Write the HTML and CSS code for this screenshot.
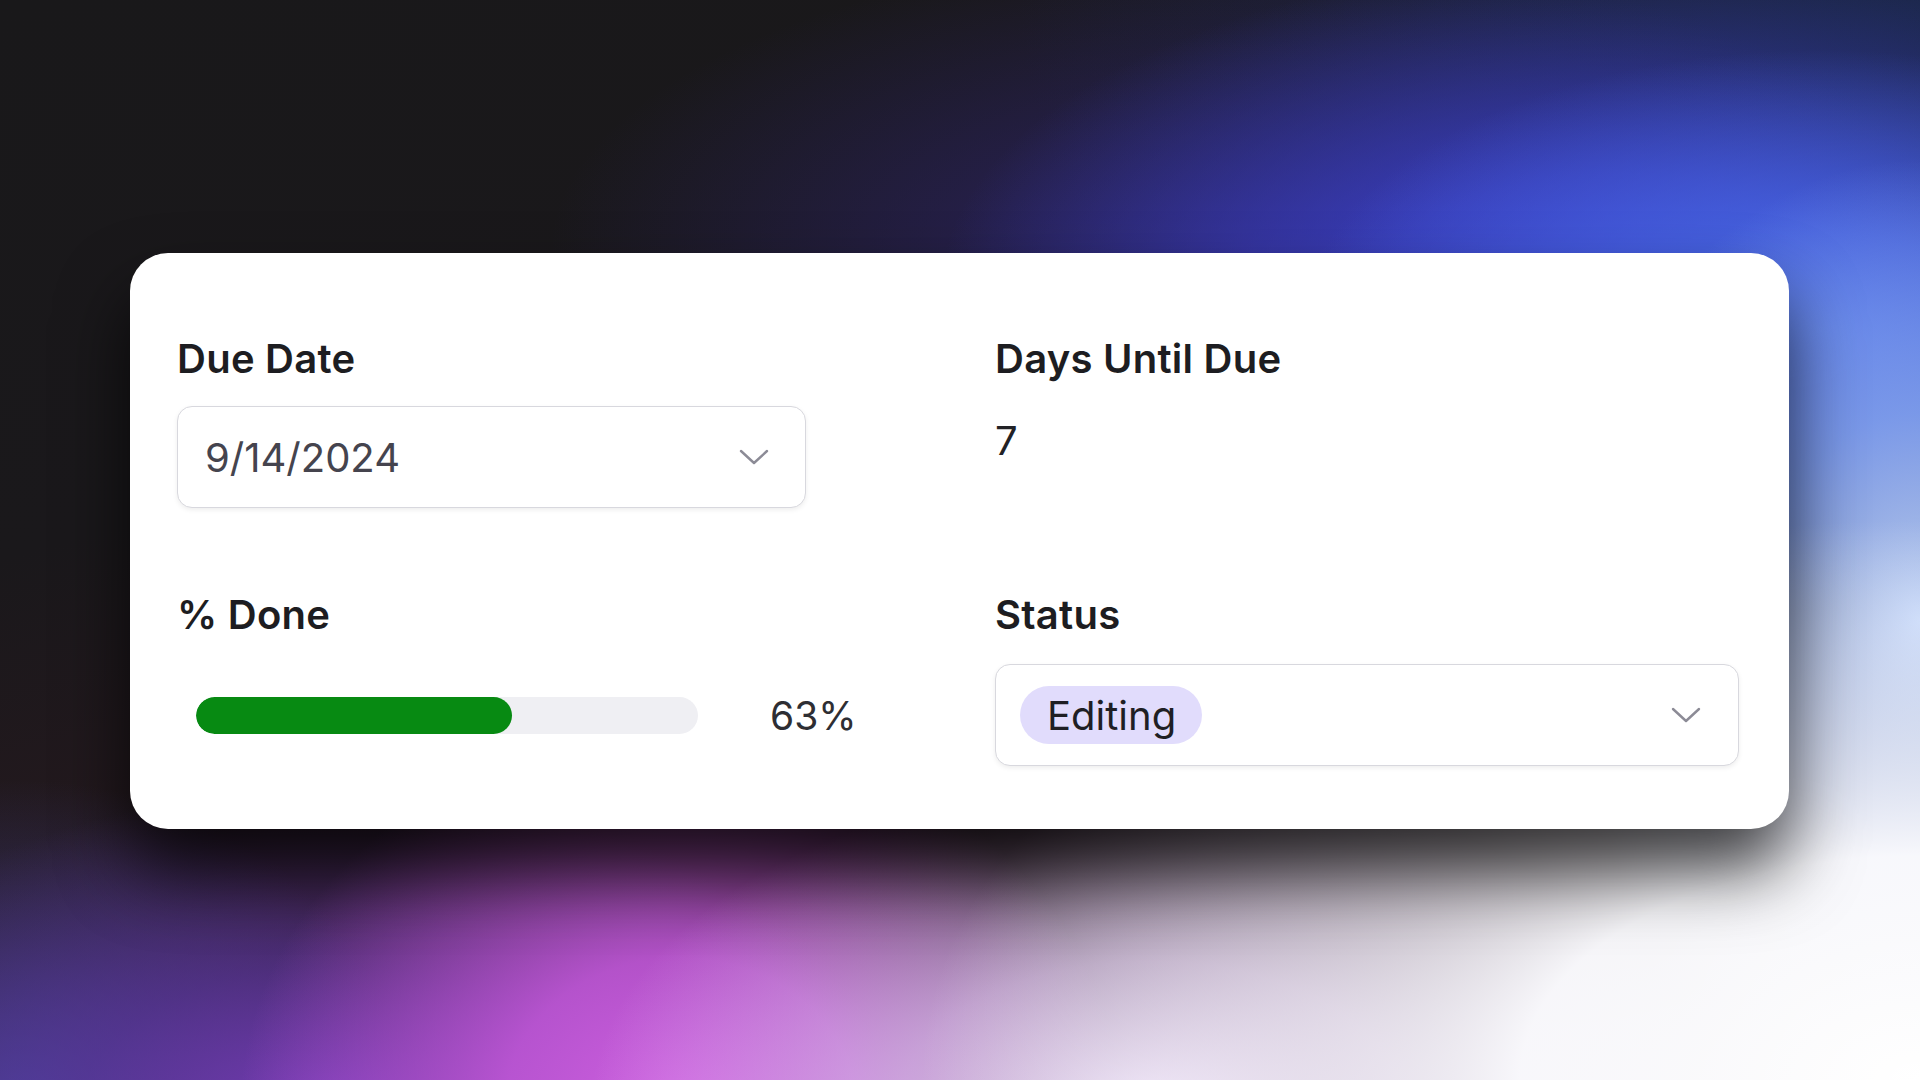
FILE: index.html
```
<!DOCTYPE html>
<html lang="en">
<head>
<meta charset="utf-8">
<title>Task properties</title>
<link rel="stylesheet" href="styles.css">
</head>
<body>
<main class="stage">
  <section class="card">
    <div class="field">
      <div class="label">Due Date</div>
      <div class="select date-select">
        <span class="date-value">9/14/2024</span>
        <svg class="chevron" viewBox="0 0 30 16" width="30" height="16"><path d="M2 2 L15 14 L28 2" fill="none" stroke="currentColor" stroke-width="2.4" stroke-linecap="round" stroke-linejoin="round"/></svg>
      </div>
    </div>
    <div class="field">
      <div class="label">Days Until Due</div>
      <div class="plain-value">7</div>
    </div>
    <div class="field field-row2">
      <div class="label">% Done</div>
      <div class="progress-row">
        <div class="track"><div class="fill" style="width:63%"></div></div>
        <span class="percent">63%</span>
      </div>
    </div>
    <div class="field field-row2">
      <div class="label">Status</div>
      <div class="select status-select">
        <span class="pill">Editing</span>
        <svg class="chevron" viewBox="0 0 30 16" width="30" height="16"><path d="M2 2 L15 14 L28 2" fill="none" stroke="currentColor" stroke-width="2.4" stroke-linecap="round" stroke-linejoin="round"/></svg>
      </div>
    </div>
  </section>
</main>
</body>
</html>
```
FILE: styles.css
```
html, body {
  margin: 0;
  padding: 0;
  width: 1920px;
  height: 1080px;
  overflow: hidden;
}
body {
  font-family: "Inter", "Liberation Sans", sans-serif;
  background:
    radial-gradient(ellipse 1000px 560px at 1920px 1080px, #ffffff 0%, rgba(252,252,255,0.97) 40%, rgba(240,240,252,0) 100%),
    radial-gradient(ellipse 560px 330px at 1150px 1110px, rgba(236,222,247,1) 0%, rgba(225,200,242,0.7) 45%, rgba(210,180,235,0) 100%),
    radial-gradient(ellipse 360px 460px at 1920px 620px, rgba(190,210,248,1) 0%, rgba(140,172,240,0.75) 45%, rgba(120,150,235,0) 100%),
    radial-gradient(ellipse 520px 280px at 1820px 330px, #4f70e6 0%, rgba(72,104,230,0.8) 35%, rgba(60,80,220,0) 100%),
    radial-gradient(ellipse 680px 330px at 1620px 290px, #3d44d6 0%, rgba(61,68,214,0.75) 35%, rgba(50,50,160,0) 100%),
    radial-gradient(ellipse 700px 300px at 1250px 250px, rgba(48,38,120,0.8) 0%, rgba(40,30,90,0) 100%),
    radial-gradient(ellipse 440px 380px at 680px 1110px, #d060e2 0%, rgba(200,90,222,0.85) 40%, rgba(140,60,180,0) 100%),
    radial-gradient(ellipse 560px 320px at 330px 1110px, rgba(122,62,190,0.95) 0%, rgba(100,55,170,0.6) 45%, rgba(0,0,0,0) 100%),
    radial-gradient(ellipse 380px 320px at 20px 1100px, #3d3f88 0%, rgba(60,60,130,0.5) 50%, rgba(0,0,0,0) 100%),
    radial-gradient(ellipse 900px 600px at 1920px 0px, rgba(28,40,78,0.95) 0%, rgba(30,40,80,0) 100%),
    linear-gradient(165deg, #19181a 0%, #1a181b 35%, #27191f 62%, #301f33 100%);
}
.stage {
  padding: 253px 0 0 130px;
}
.card {
  width: 1659px;
  box-sizing: border-box;
  background: #ffffff;
  border-radius: 38px;
  padding: 83px 50px 63px 47px;
  display: grid;
  grid-template-columns: 744px 744px;
  column-gap: 74px;
  row-gap: 84px;
  box-shadow: 0 42px 70px rgba(0, 0, 0, 0.72);
}
.field {
  display: flex;
  flex-direction: column;
}
.label {
  font-size: 40px;
  line-height: 46px;
  font-weight: 600;
  color: #1d1d21;
  letter-spacing: 0.25px;
  margin-bottom: 24px;
}
.field-row2 .label {
  margin-bottom: 26px;
}
.select {
  height: 102px;
  box-sizing: border-box;
  border: 1.5px solid #d8d8de;
  border-radius: 15px;
  background: #fff;
  box-shadow: 0 2px 5px rgba(0, 0, 0, 0.07);
  display: flex;
  align-items: center;
  justify-content: space-between;
}
.date-select {
  width: 629px;
  padding: 0 36px 0 27px;
}
.status-select {
  width: 744px;
  padding: 0 37px 0 24px;
}
.chevron {
  color: #8c8b96;
  flex: none;
}
.date-value {
  font-size: 40px;
  color: #45444e;
}
.plain-value {
  font-size: 40px;
  line-height: 48px;
  color: #222226;
  margin-top: 11px;
}
.progress-row {
  height: 102px;
  display: flex;
  align-items: center;
  padding-left: 19px;
}
.track {
  width: 502px;
  height: 37px;
  border-radius: 19px;
  background: #efeff3;
  overflow: hidden;
}
.fill {
  height: 100%;
  background: #078a12;
  border-radius: 19px;
}
.percent {
  margin-left: 72px;
  font-size: 39px;
  color: #2e2e33;
}
.pill {
  height: 58px;
  display: inline-flex;
  align-items: center;
  padding: 0 26px 0 27px;
  background: #e1dcfc;
  border-radius: 29px;
  font-size: 40px;
  color: #1f1f24;
}
```
